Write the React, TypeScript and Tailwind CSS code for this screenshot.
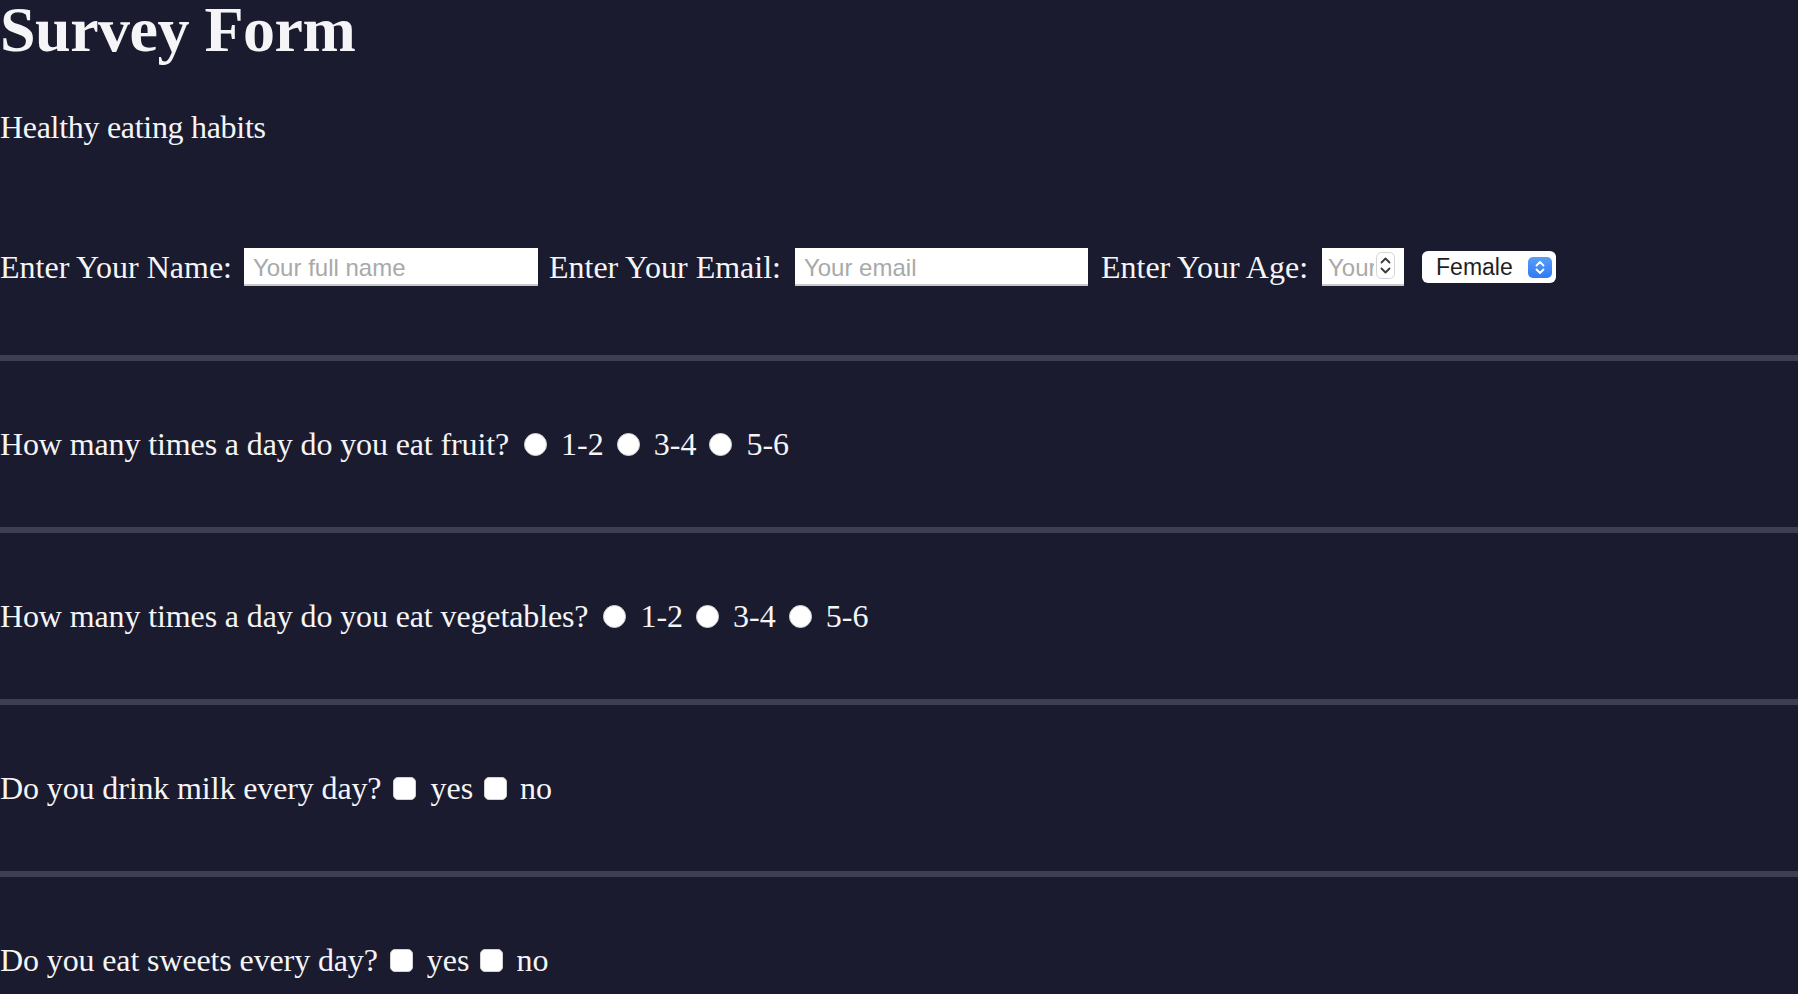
import React from 'react';

const serif = "font-['Liberation_Serif','Times_New_Roman',serif]";
const sans = "font-['Liberation_Sans',Arial,sans-serif]";

function Radio({ name }: { name: string }) {
  return (
    <input
      type="radio"
      name={name}
      className="appearance-none w-[23px] h-[23px] rounded-full bg-white border border-[#d2d2d2] shrink-0 m-0"
    />
  );
}

function Check() {
  return (
    <input
      type="checkbox"
      className="appearance-none w-[23px] h-[23px] rounded-[5px] bg-white border border-[#d2d2d2] shrink-0 m-0"
    />
  );
}

// 라디오 질문 한 줄
function RadioQuestion({ label, name }: { label: string; name: string }) {
  const options = ['1-2', '3-4', '5-6'];
  return (
    <div className="flex items-center h-[40px]">
      <span className="tracking-[-0.12px]">{label}</span>
      {options.map((opt, i) => (
        <React.Fragment key={opt}>
          <span className={i === 0 ? 'ml-[15px] flex' : 'ml-[13px] flex'}>
            <Radio name={name} />
          </span>
          <span className="ml-[14px]">{opt}</span>
        </React.Fragment>
      ))}
    </div>
  );
}

// 체크박스 질문 한 줄
function CheckQuestion({ label }: { label: string }) {
  return (
    <div className="flex items-center h-[40px]">
      <span className="tracking-[-0.12px]">{label}</span>
      <span className="ml-[12px] flex">
        <Check />
      </span>
      <span className="ml-[14px]">yes</span>
      <span className="ml-[11px] flex">
        <Check />
      </span>
      <span className="ml-[13px]">no</span>
    </div>
  );
}

function Divider() {
  return <hr className="h-[6px] border-0 bg-[#3e3d51] m-0" />;
}

const field = `h-[38px] bg-white border-b-2 border-[#c9c9c9] pt-[3px] ${sans} text-[24px] text-black placeholder:text-[#a9a9a9] outline-none`;

export default function App() {
  return (
    <div className={`h-screen overflow-hidden bg-[#1b1b2f] text-[#f5f5f7] ${serif} text-[32px] leading-[37px]`}>
      {/* 헤더 */}
      <h1 className="m-0 text-[64px] leading-[60px] font-bold tracking-[-0.5px]">Survey Form</h1>
      <p className="mt-[49px] tracking-[-0.3px]">Healthy eating habits</p>

      {/* 기본 정보 */}
      <div className="mt-[101px] flex items-center h-[40px]">
        <span>Enter Your Name:</span>
        <input type="text" placeholder="Your full name" className={`ml-[12px] w-[294px] pl-[9px] ${field}`} />
        <span className="ml-[11px]">Enter Your Email:</span>
        <input type="email" placeholder="Your email" className={`ml-[14px] w-[293px] pl-[9px] ${field}`} />
        <span className="ml-[13px]">Enter Your Age:</span>
        <div className="relative ml-[14px] flex">
          <input
            type="number"
            placeholder="Your age"
            className={`w-[82px] pl-[6px] pr-[30px] appearance-none [&::-webkit-inner-spin-button]:appearance-none [&::-webkit-outer-spin-button]:appearance-none ${field}`}
          />
          <svg className="absolute right-[9px] top-[4px] pointer-events-none" width="19" height="27" viewBox="0 0 19 27">
            <rect x="0.5" y="0.5" width="18" height="26" rx="5" fill="#fff" stroke="#d4d4d4" />
            <path d="M5.5 10.5 L9.5 6.5 L13.5 10.5" fill="none" stroke="#3a3a3a" strokeWidth="1.8" strokeLinecap="round" strokeLinejoin="round" />
            <path d="M5.5 16.5 L9.5 20.5 L13.5 16.5" fill="none" stroke="#3a3a3a" strokeWidth="1.8" strokeLinecap="round" strokeLinejoin="round" />
          </svg>
        </div>
        <div className="relative ml-[18px] flex">
          <select className={`appearance-none w-[134px] h-[32px] rounded-[6px] bg-white pl-[14px] ${sans} text-[23px] leading-[32px] text-[#1f1f1f] outline-none`}>
            <option>Female</option>
            <option>Male</option>
          </select>
          <svg className="absolute right-[4px] top-[6px] pointer-events-none" width="24" height="21" viewBox="0 0 24 21">
            <defs>
              <linearGradient id="selBlue" x1="0" y1="0" x2="0" y2="1">
                <stop offset="0" stopColor="#5b9df9" />
                <stop offset="1" stopColor="#2f7bf5" />
              </linearGradient>
            </defs>
            <rect x="0" y="0" width="24" height="21" rx="5" fill="url(#selBlue)" />
            <path d="M8.5 8.5 L12 5 L15.5 8.5" fill="none" stroke="#fff" strokeWidth="1.8" strokeLinecap="round" strokeLinejoin="round" />
            <path d="M8.5 12.5 L12 16 L15.5 12.5" fill="none" stroke="#fff" strokeWidth="1.8" strokeLinecap="round" strokeLinejoin="round" />
          </svg>
        </div>
      </div>

      {/* 질문 목록 */}
      <div className="mt-[68px]">
        <Divider />
        <div className="py-[63px]">
          <RadioQuestion label="How many times a day do you eat fruit?" name="fruit" />
        </div>
        <Divider />
        <div className="py-[63px]">
          <RadioQuestion label="How many times a day do you eat vegetables?" name="vegetables" />
        </div>
        <Divider />
        <div className="py-[63px]">
          <CheckQuestion label="Do you drink milk every day?" />
        </div>
        <Divider />
        <div className="py-[63px]">
          <CheckQuestion label="Do you eat sweets every day?" />
        </div>
      </div>
    </div>
  );
}
